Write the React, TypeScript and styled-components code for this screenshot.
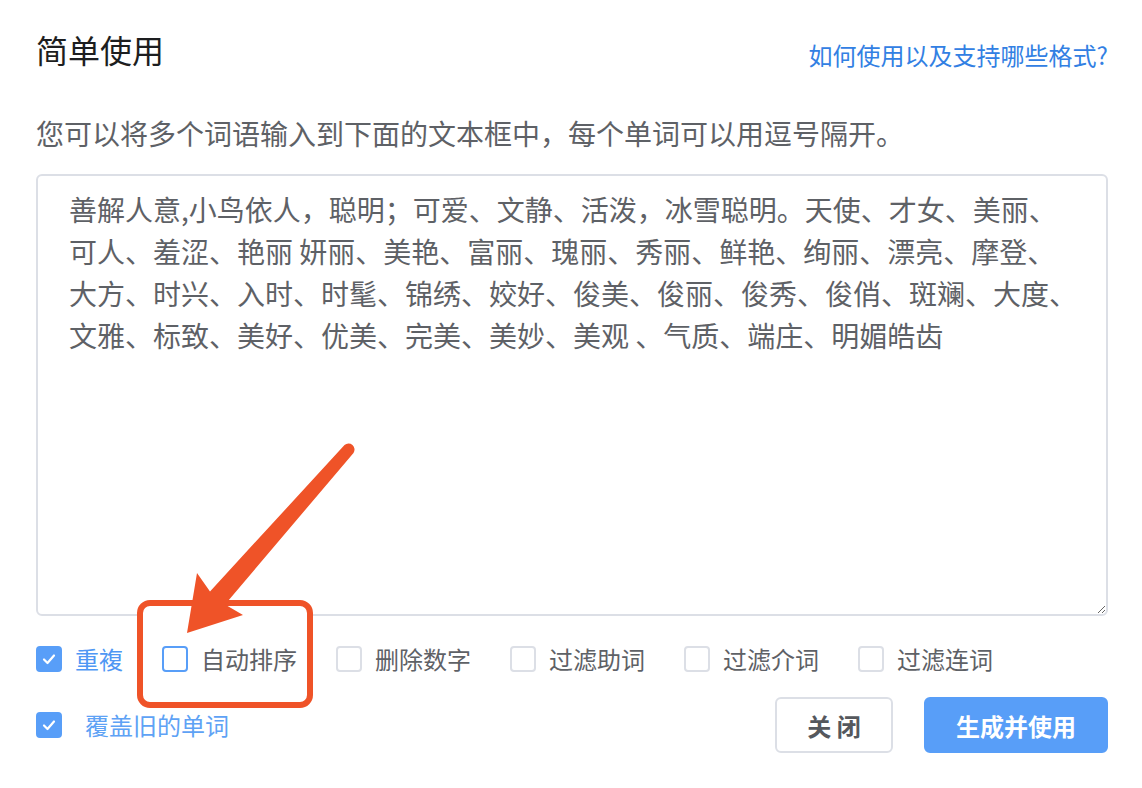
import React from 'react'
import styled, { createGlobalStyle } from 'styled-components'

const GlobalStyle = createGlobalStyle`
  html, body {
    margin: 0;
    padding: 0;
    background: #fff;
  }
  body {
    font-family: "Noto Sans CJK SC", "Noto Sans", sans-serif;
  }
`

const Page = styled.div`
  position: relative;
  width: 1142px;
  height: 788px;
  box-sizing: border-box;
  padding: 33px 34px 0 36px;
  overflow: hidden;
`

const Header = styled.div`
  display: flex;
  justify-content: space-between;
  align-items: flex-start;
`

const Title = styled.h2`
  margin: 0;
  font-size: 32px;
  line-height: 32px;
  font-weight: 400;
  color: #1d1e20;
`

const HelpLink = styled.a`
  margin-top: 10px;
  font-size: 24px;
  line-height: 24px;
  color: #3280e3;
  text-decoration: none;
  cursor: pointer;
`

const Description = styled.p`
  margin: 52px 0 0;
  font-size: 28px;
  line-height: 28px;
  color: #5e6166;
`

const WordInput = styled.textarea`
  display: block;
  box-sizing: border-box;
  width: 100%;
  height: 442px;
  margin-top: 27px;
  padding: 12px 25px 12px 31px;
  border: 2px solid #dcdfe6;
  border-radius: 6px;
  font-family: inherit;
  font-size: 28px;
  line-height: 42px;
  color: #5e6166;
  resize: both;
  outline: none;
`

const CheckRow = styled.div`
  display: flex;
  align-items: center;
  gap: 39px;
  margin-top: 30px;
`

const CheckItem = styled.label<{ $gap?: number }>`
  display: flex;
  align-items: center;
  gap: ${({ $gap }) => $gap ?? 13}px;
  cursor: pointer;
`

const Box = styled.span<{ $checked?: boolean; $focused?: boolean }>`
  display: flex;
  align-items: center;
  justify-content: center;
  box-sizing: border-box;
  width: 26px;
  height: 26px;
  border-radius: 4px;
  border: 2px solid
    ${({ $checked, $focused }) => ($checked || $focused ? '#589ef8' : '#dcdfe6')};
  background: ${({ $checked }) => ($checked ? '#589ef8' : '#fff')};
`

const CheckLabel = styled.span<{ $checked?: boolean; $light?: boolean }>`
  font-size: 24px;
  line-height: 26px;
  color: ${({ $checked, $light }) => ($light ? '#5ea2f5' : $checked ? '#4f97f4' : '#5e6166')};
`

const Footer = styled.div`
  display: flex;
  justify-content: space-between;
  align-items: center;
  margin-top: 25px;
`

const Buttons = styled.div`
  display: flex;
  gap: 31px;
`

const Button = styled.button<{ $primary?: boolean; $width: number }>`
  box-sizing: border-box;
  width: ${({ $width }) => $width}px;
  height: 56px;
  padding: 0;
  border-radius: 6px;
  border: 2px solid ${({ $primary }) => ($primary ? '#589ef8' : '#dcdfe6')};
  background: ${({ $primary }) => ($primary ? '#589ef8' : '#fff')};
  color: ${({ $primary }) => ($primary ? '#fff' : '#55585d')};
  font-family: inherit;
  font-size: 24px;
  font-weight: 700;
  white-space: pre;
  cursor: pointer;
`

const Annotation = styled.svg`
  position: absolute;
  left: 0;
  top: 0;
  pointer-events: none;
`

const words =
  '善解人意,小鸟依人，聪明；可爱、文静、活泼，冰雪聪明。天使、才女、美丽、可人、羞涩、艳丽 妍丽、美艳、富丽、瑰丽、秀丽、鲜艳、绚丽、漂亮、摩登、大方、时兴、入时、时髦、锦绣、姣好、俊美、俊丽、俊秀、俊俏、斑斓、大度、文雅、标致、美好、优美、完美、美妙、美观 、气质、端庄、明媚皓齿'

const options = [
  { label: '重複', checked: true },
  { label: '自动排序', focused: true },
  { label: '删除数字' },
  { label: '过滤助词' },
  { label: '过滤介词' },
  { label: '过滤连词' },
]

const Tick = () => (
  <svg width="16" height="16" viewBox="0 0 16 16">
    <polyline points="3,8.5 6.5,12 13,4.5" fill="none" stroke="#fff" strokeWidth="2.2" strokeLinecap="round" strokeLinejoin="round" />
  </svg>
)

const Checkbox = ({
  label,
  checked,
  focused,
  gap,
  light,
}: {
  label: string
  checked?: boolean
  focused?: boolean
  gap?: number
  light?: boolean
}) => (
  <CheckItem $gap={gap}>
    <Box $checked={checked} $focused={focused}>{checked && <Tick />}</Box>
    <CheckLabel $checked={checked} $light={light}>{label}</CheckLabel>
  </CheckItem>
)

export default function App() {
  return (
    <>
      <GlobalStyle />
      <Page>
        <Header>
          <Title>简单使用</Title>
          <HelpLink>如何使用以及支持哪些格式?</HelpLink>
        </Header>
        <Description>您可以将多个词语输入到下面的文本框中，每个单词可以用逗号隔开。</Description>
        <WordInput defaultValue={words} spellCheck={false} />
        <CheckRow>
          {options.map((o) => (
            <Checkbox key={o.label} label={o.label} checked={o.checked} focused={o.focused} />
          ))}
        </CheckRow>
        <Footer>
          <Checkbox label="覆盖旧的单词" checked light gap={23} />
          <Buttons>
            <Button $width={118}>关 闭</Button>
            <Button $primary $width={184}>生成并使用</Button>
          </Buttons>
        </Footer>

        <Annotation width="1142" height="788" viewBox="0 0 1142 788">
          <rect x="142" y="613" width="166" height="8" fill="#fff" />
          <rect x="140" y="603" width="170" height="102" rx="10" fill="none" stroke="#ef5328" strokeWidth="6" />
          <path
            d="M344.5 445.1 L210 591.4 L197 573 L187 633 L243 615 L225 604.6 L353.5 452.9 A6 6 0 0 0 344.5 445.1 Z"
            fill="#ef5328"
          />
        </Annotation>
      </Page>
    </>
  )
}
